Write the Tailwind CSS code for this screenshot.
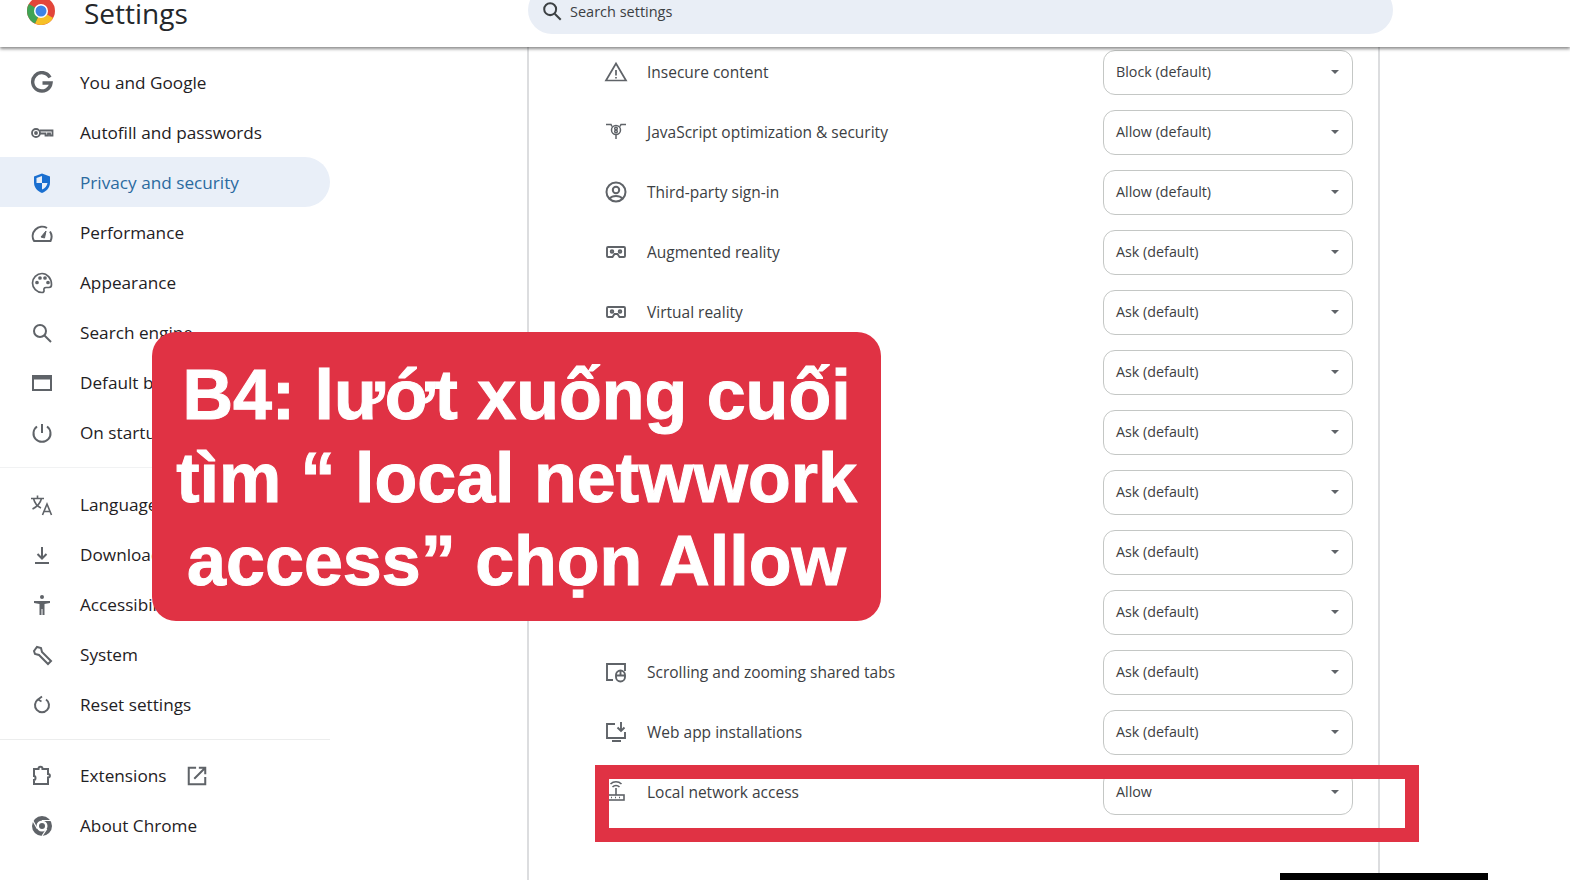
<!DOCTYPE html>
<html lang="en">
<head>
  <meta charset="UTF-8" />
  <title>Settings</title>
  <script src="https://cdn.jsdelivr.net/npm/@tailwindcss/browser@4"></script>
</head>
<body class="bg-white h-[880px] w-[1570px] overflow-hidden relative font-['Open_Sans','Noto_Sans',sans-serif] text-[#24272b]">
  <!-- Header -->
  <header class="relative z-10 h-[47px] bg-white shadow-[0_2px_3px_rgba(0,0,0,0.45)] flex items-start overflow-hidden">
    <div class="w-[528px] shrink-0 flex items-center h-[28px] -mt-[3px] pl-[27px]">
      <svg class="w-[28px] h-[28px]" viewBox="0 0 28 28">
        <circle cx="14" cy="14" r="14" fill="#e2453a"/>
        <path d="M14 14 L26.100 21 A14 14 0 0 1 8 26.600 Z" fill="#f6c026"/>
        <path d="M14 14 L8 26.600 A14 14 0 0 1 1.900 7 Z" fill="#3fa455"/>
        <circle cx="14" cy="14" r="7" fill="#fff"/>
        <circle cx="14" cy="14" r="5.500" fill="#3d83e6"/>
      </svg>
      <span class="ml-[29px] text-[28px] leading-none pt-[3px]">Settings</span>
    </div>
    <div class="w-[865px] h-[48px] -mt-[14px] rounded-[24px] bg-[#e9eef6] flex items-center pl-[13px] text-[14.500px] text-[#3c4043]">
      <svg class="w-[22px] h-[22px] mr-[7px] mt-[1px]" viewBox="0 0 24 24" fill="none" stroke="#3c4043" stroke-width="2.200"><circle cx="10" cy="10" r="6.500"/><path d="M15 15l6.500 6.500"/></svg>
      <span class="pt-[3px]">Search settings</span>
    </div>
  </header>

  <div class="flex h-[833px]">
    <!-- Sidebar -->
    <nav class="w-[527px] shrink-0 pt-[10px] text-[17.200px] text-[#1f2124]">
      <div class="w-[330px]">
        <a class="h-[50px] pt-[2px] flex items-center">
          <svg class="w-[24px] h-[24px] ml-[30px] mr-[26px]" viewBox="0 0 24 24" fill="none" stroke="#5f6368" stroke-width="3.400"><path d="M20 6.500A9.200 9.200 0 1 0 21 12h-8.500"/></svg>
          You and Google
        </a>
        <a class="h-[50px] pt-[2px] flex items-center">
          <svg class="w-[24px] h-[24px] ml-[30px] mr-[26px]" viewBox="0 0 24 24" fill="none" stroke="#5f6368" stroke-width="1.800"><circle cx="6" cy="12" r="4"/><circle cx="6" cy="12" r="1" fill="#5f6368"/><path d="M10 9.500h12.500v5h-2.500v-2h-2v2h-2.500v-2h-5.500"/></svg>
          Autofill and passwords
        </a>
        <a class="h-[50px] pt-[2px] flex items-center rounded-r-[25px] bg-[#e9eff8] text-[#2b6a9f]">
          <svg class="w-[24px] h-[24px] ml-[30px] mr-[26px]" viewBox="0 0 24 24"><path d="M12 2.500l8 3v6c0 5-3.400 8.800-8 10.500-4.600-1.700-8-5.500-8-10.500v-6z" fill="#1a6fd0"/><path d="M12 5v7H6.500V7zM12 12h5.500c-.4 3-2.600 5.300-5.500 6.600z" fill="#e9eff8"/></svg>
          Privacy and security
        </a>
        <a class="h-[50px] pt-[2px] flex items-center">
          <svg class="w-[24px] h-[24px] ml-[30px] mr-[26px]" viewBox="0 0 24 24" fill="none" stroke="#5f6368" stroke-width="2"><path d="M4 20a9.500 9.500 0 0 1 13-13M20 10.500a9.500 9.500 0 0 1 .5 9.500H3.500"/><path d="M11 16l5-6-1.500 7z" fill="#5f6368" stroke-width="1"/></svg>
          Performance
        </a>
        <a class="h-[50px] pt-[2px] flex items-center">
          <svg class="w-[24px] h-[24px] ml-[30px] mr-[26px]" viewBox="0 0 24 24" fill="none" stroke="#5f6368" stroke-width="1.700"><path d="M12 2.500a9.500 9.500 0 0 0 0 19c1.500 0 2.200-1 2-2-.3-1.500 0-3 2-3h3c1.500 0 2.500-1.200 2.500-3 0-6.500-4.500-11-9.500-11z"/><circle cx="7" cy="11.500" r="1" fill="#5f6368"/><circle cx="10" cy="7" r="1" fill="#5f6368"/><circle cx="15" cy="7" r="1" fill="#5f6368"/><circle cx="18" cy="11.500" r="1" fill="#5f6368"/></svg>
          Appearance
        </a>
        <a class="h-[50px] pt-[2px] flex items-center">
          <svg class="w-[24px] h-[24px] ml-[30px] mr-[26px]" viewBox="0 0 24 24" fill="none" stroke="#5f6368" stroke-width="2"><circle cx="10" cy="10" r="6"/><path d="M14.500 14.500l6.500 6.500"/></svg>
          Search engine
        </a>
        <a class="h-[50px] pt-[2px] flex items-center">
          <svg class="w-[24px] h-[24px] ml-[30px] mr-[26px]" viewBox="0 0 24 24" fill="none" stroke="#5f6368" stroke-width="2"><rect x="3" y="5" width="18" height="14"/><path d="M3 7h18" stroke-width="3"/></svg>
          Default browser
        </a>
        <a class="h-[50px] pt-[2px] flex items-center">
          <svg class="w-[24px] h-[24px] ml-[30px] mr-[26px]" viewBox="0 0 24 24" fill="none" stroke="#5f6368" stroke-width="2"><path d="M12 3v9M7 5.500a8.500 8.500 0 1 0 10 0"/></svg>
          On startup
        </a>
        <div class="h-[11px] border-b border-[#f1f2f3] mb-[11px]"></div>
        <a class="h-[50px] pt-[2px] flex items-center">
          <svg class="w-[24px] h-[24px] ml-[30px] mr-[26px]" viewBox="0 0 24 24" fill="none" stroke="#5f6368" stroke-width="1.600"><path d="M1 5.500h13M7.500 2.500v3M3.500 5.500c1 4 4 8 7.500 9.500M11.500 5.500c-1 4-4 8-9 10.500"/><path d="M12.500 22l4.500-11 4.500 11M14 18.500h6"/></svg>
          Languages
        </a>
        <a class="h-[50px] pt-[2px] flex items-center">
          <svg class="w-[24px] h-[24px] ml-[30px] mr-[26px]" viewBox="0 0 24 24" fill="none" stroke="#5f6368" stroke-width="2"><path d="M12 4v11M7.500 11l4.500 4.500 4.500-4.500M5 20h14"/></svg>
          Downloads
        </a>
        <a class="h-[50px] pt-[2px] flex items-center">
          <svg class="w-[24px] h-[24px] ml-[30px] mr-[26px]" viewBox="0 0 24 24" fill="#5f6368"><circle cx="12" cy="4" r="2"/><path d="M4 8h16v2l-5.500 1v11h-2v-6h-1v6h-2V11L4 10z"/></svg>
          Accessibility
        </a>
        <a class="h-[50px] pt-[2px] flex items-center">
          <svg class="w-[24px] h-[24px] ml-[30px] mr-[26px]" viewBox="0 0 24 24" fill="none" stroke="#5f6368" stroke-width="2"><path d="M4 8l3-4 4 1 1 4 9 9-3 3-9-9-4-1z"/></svg>
          System
        </a>
        <a class="h-[50px] pt-[2px] flex items-center">
          <svg class="w-[24px] h-[24px] ml-[30px] mr-[26px]" viewBox="0 0 24 24" fill="none" stroke="#5f6368" stroke-width="2"><path d="M8 6.500a7 7 0 1 0 8 0"/><path d="M12 3.500L8 6.500l3.500 2" stroke-width="1.800"/></svg>
          Reset settings
        </a>
        <div class="h-[11px] border-b border-[#eceded] mb-[10px]"></div>
        <a class="h-[50px] pt-[2px] flex items-center">
          <svg class="w-[24px] h-[24px] ml-[30px] mr-[26px]" viewBox="0 0 24 24" fill="none" stroke="#5f6368" stroke-width="2"><path d="M4 5h4.500c0-3 4-3 4 0H18v5c2.500 0 2.500 3.500 0 3.500V20H4v-4c2 0 2-4 0-4z"/></svg>
          Extensions
          <svg class="w-[22px] h-[22px] ml-[20px]" viewBox="0 0 24 24" fill="none" stroke="#5f6368" stroke-width="2.200"><path d="M11 3H3v18h18v-8M9 15L21 3M14 3h7v7"/></svg>
        </a>
        <a class="h-[50px] pt-[2px] flex items-center">
          <svg class="w-[24px] h-[24px] ml-[30px] mr-[26px]" viewBox="0 0 24 24"><circle cx="12" cy="12" r="10" fill="#5f6368"/><circle cx="12" cy="12" r="5.500" fill="#fff"/><circle cx="12" cy="12" r="3" fill="#5f6368"/><path d="M12 6.500h9M7.300 14.800L3 7M16.800 14.800L12 22" stroke="#fff" stroke-width="1.200"/></svg>
          About Chrome
        </a>
      </div>
    </nav>

    <!-- Main column -->
    <main class="w-[853px] shrink-0 h-full border-x-2 border-[#dcdddf] pl-[75px] text-[15.500px] text-[#3c4043]">
      <div class="-mt-[5px]">
        <div class="h-[60px] flex items-center">
          <svg class="w-[24px] h-[24px] mr-[19px]" viewBox="0 0 24 24" fill="none" stroke="#5f6368" stroke-width="1.700"><path d="M12 3.500L22 20.500H2z"/><path d="M12 10v5.500M12 17v1.500"/></svg>
          <span class="w-[456px] pt-[2px]">Insecure content</span>
          <div class="w-[250px] h-[45px] rounded-[12px] border border-[#c4c7c5] flex items-center justify-between px-[12px] pr-[13px] text-[14.300px]">Block (default)<span class="w-0 h-0 border-x-[4.500px] border-x-transparent border-t-[4.500px] border-t-[#5f6368]"></span></div>
        </div>
        <div class="h-[60px] flex items-center">
          <svg class="w-[24px] h-[24px] mr-[19px]" viewBox="0 0 24 24" fill="none" stroke="#5f6368" stroke-width="1.500"><circle cx="12" cy="10" r="4.500"/><circle cx="12" cy="8.500" r="1.300"/><circle cx="12" cy="11.500" r="1.300"/><path d="M2 4.500h5l1 2M22 4.500h-5l-1 2M12 15v4"/></svg>
          <span class="w-[456px] pt-[2px]">JavaScript optimization &amp; security</span>
          <div class="w-[250px] h-[45px] rounded-[12px] border border-[#c4c7c5] flex items-center justify-between px-[12px] pr-[13px] text-[14.300px]">Allow (default)<span class="w-0 h-0 border-x-[4.500px] border-x-transparent border-t-[4.500px] border-t-[#5f6368]"></span></div>
        </div>
        <div class="h-[60px] flex items-center">
          <svg class="w-[24px] h-[24px] mr-[19px]" viewBox="0 0 24 24" fill="none" stroke="#5f6368" stroke-width="2"><circle cx="12" cy="12" r="9.500"/><circle cx="12" cy="10" r="3.200"/><path d="M5.500 18.500c3-3.500 10-3.500 13 0"/></svg>
          <span class="w-[456px] pt-[2px]">Third-party sign-in</span>
          <div class="w-[250px] h-[45px] rounded-[12px] border border-[#c4c7c5] flex items-center justify-between px-[12px] pr-[13px] text-[14.300px]">Allow (default)<span class="w-0 h-0 border-x-[4.500px] border-x-transparent border-t-[4.500px] border-t-[#5f6368]"></span></div>
        </div>
        <div class="h-[60px] flex items-center">
          <svg class="w-[24px] h-[24px] mr-[19px]" viewBox="0 0 24 24" fill="none" stroke="#5f6368" stroke-width="1.900"><path d="M4 7h16a1 1 0 0 1 1 1v8a1 1 0 0 1-1 1h-4.500l-2-3h-3l-2 3H4a1 1 0 0 1-1-1V8a1 1 0 0 1 1-1z"/><circle cx="8" cy="11.500" r="1.300"/><circle cx="16" cy="11.500" r="1.300"/></svg>
          <span class="w-[456px] pt-[2px]">Augmented reality</span>
          <div class="w-[250px] h-[45px] rounded-[12px] border border-[#c4c7c5] flex items-center justify-between px-[12px] pr-[13px] text-[14.300px]">Ask (default)<span class="w-0 h-0 border-x-[4.500px] border-x-transparent border-t-[4.500px] border-t-[#5f6368]"></span></div>
        </div>
        <div class="h-[60px] flex items-center">
          <svg class="w-[24px] h-[24px] mr-[19px]" viewBox="0 0 24 24" fill="none" stroke="#5f6368" stroke-width="1.900"><path d="M4 7h16a1 1 0 0 1 1 1v8a1 1 0 0 1-1 1h-4.500l-2-3h-3l-2 3H4a1 1 0 0 1-1-1V8a1 1 0 0 1 1-1z"/><circle cx="8" cy="11.500" r="1.300"/><circle cx="16" cy="11.500" r="1.300"/></svg>
          <span class="w-[456px] pt-[2px]">Virtual reality</span>
          <div class="w-[250px] h-[45px] rounded-[12px] border border-[#c4c7c5] flex items-center justify-between px-[12px] pr-[13px] text-[14.300px]">Ask (default)<span class="w-0 h-0 border-x-[4.500px] border-x-transparent border-t-[4.500px] border-t-[#5f6368]"></span></div>
        </div>
        <!-- labels of the next rows are hidden by the red callout -->
        <div class="h-[60px] flex items-center justify-end pr-[25px]">
          <div class="w-[250px] h-[45px] rounded-[12px] border border-[#c4c7c5] flex items-center justify-between px-[12px] pr-[13px] text-[14.300px]">Ask (default)<span class="w-0 h-0 border-x-[4.500px] border-x-transparent border-t-[4.500px] border-t-[#5f6368]"></span></div>
        </div>
        <div class="h-[60px] flex items-center justify-end pr-[25px]">
          <div class="w-[250px] h-[45px] rounded-[12px] border border-[#c4c7c5] flex items-center justify-between px-[12px] pr-[13px] text-[14.300px]">Ask (default)<span class="w-0 h-0 border-x-[4.500px] border-x-transparent border-t-[4.500px] border-t-[#5f6368]"></span></div>
        </div>
        <div class="h-[60px] flex items-center justify-end pr-[25px]">
          <div class="w-[250px] h-[45px] rounded-[12px] border border-[#c4c7c5] flex items-center justify-between px-[12px] pr-[13px] text-[14.300px]">Ask (default)<span class="w-0 h-0 border-x-[4.500px] border-x-transparent border-t-[4.500px] border-t-[#5f6368]"></span></div>
        </div>
        <div class="h-[60px] flex items-center justify-end pr-[25px]">
          <div class="w-[250px] h-[45px] rounded-[12px] border border-[#c4c7c5] flex items-center justify-between px-[12px] pr-[13px] text-[14.300px]">Ask (default)<span class="w-0 h-0 border-x-[4.500px] border-x-transparent border-t-[4.500px] border-t-[#5f6368]"></span></div>
        </div>
        <div class="h-[60px] flex items-center justify-end pr-[25px]">
          <div class="w-[250px] h-[45px] rounded-[12px] border border-[#c4c7c5] flex items-center justify-between px-[12px] pr-[13px] text-[14.300px]">Ask (default)<span class="w-0 h-0 border-x-[4.500px] border-x-transparent border-t-[4.500px] border-t-[#5f6368]"></span></div>
        </div>
        <div class="h-[60px] flex items-center">
          <svg class="w-[24px] h-[24px] mr-[19px]" viewBox="0 0 24 24" fill="none" stroke="#5f6368" stroke-width="1.900"><path d="M9 20H3V4h18v7"/><rect x="12" y="10.500" width="9" height="11" rx="4.500"/><path d="M16.500 10.500v5M12 15.500h9"/></svg>
          <span class="w-[456px] pt-[2px]">Scrolling and zooming shared tabs</span>
          <div class="w-[250px] h-[45px] rounded-[12px] border border-[#c4c7c5] flex items-center justify-between px-[12px] pr-[13px] text-[14.300px]">Ask (default)<span class="w-0 h-0 border-x-[4.500px] border-x-transparent border-t-[4.500px] border-t-[#5f6368]"></span></div>
        </div>
        <div class="h-[60px] flex items-center">
          <svg class="w-[24px] h-[24px] mr-[19px]" viewBox="0 0 24 24" fill="none" stroke="#5f6368" stroke-width="1.900"><path d="M11 4H3v14h18v-6M8 21h9"/><path d="M17 2v9M13.500 7.500L17 11l3.500-3.500"/></svg>
          <span class="w-[456px] pt-[2px]">Web app installations</span>
          <div class="w-[250px] h-[45px] rounded-[12px] border border-[#c4c7c5] flex items-center justify-between px-[12px] pr-[13px] text-[14.300px]">Ask (default)<span class="w-0 h-0 border-x-[4.500px] border-x-transparent border-t-[4.500px] border-t-[#5f6368]"></span></div>
        </div>
        <div class="h-[60px] flex items-center">
          <svg class="w-[24px] h-[24px] mr-[19px]" viewBox="0 0 24 24" fill="none" stroke="#5f6368" stroke-width="1.600"><rect x="4" y="15" width="16" height="5"/><path d="M12 15V8M8.500 7a5 5 0 0 1 7 0M6.500 4a8 8 0 0 1 11 0"/><path d="M7 17.500h1M11 17.500h1M15 17.500h1"/></svg>
          <span class="w-[456px] pt-[2px]">Local network access</span>
          <div class="w-[250px] h-[45px] rounded-[12px] border border-[#c4c7c5] flex items-center justify-between px-[12px] pr-[13px] text-[14.300px]">Allow<span class="w-0 h-0 border-x-[4.500px] border-x-transparent border-t-[4.500px] border-t-[#5f6368]"></span></div>
        </div>
      </div>
    </main>
  </div>

  <!-- Annotations over the screenshot -->
  <div class="absolute z-20 left-[152px] top-[332px] w-[729px] h-[289px] pt-[3px] rounded-[24px] bg-[#e03244] flex items-center justify-center text-center text-white font-['Liberation_Sans',sans-serif] font-bold text-[70px] leading-[83px] whitespace-nowrap [-webkit-text-stroke:1px_white]">
    <p>B4: lướt xuống cuối<br>tìm “ local netwwork<br>access” chọn Allow</p>
  </div>
  <div class="absolute z-20 left-[595px] top-[765px] w-[824px] h-[77px] border-[14px] border-[#e03244]"></div>
  <div class="absolute z-20 left-[1280px] top-[873px] w-[208px] h-[7px] bg-black"></div>
</body>
</html>
